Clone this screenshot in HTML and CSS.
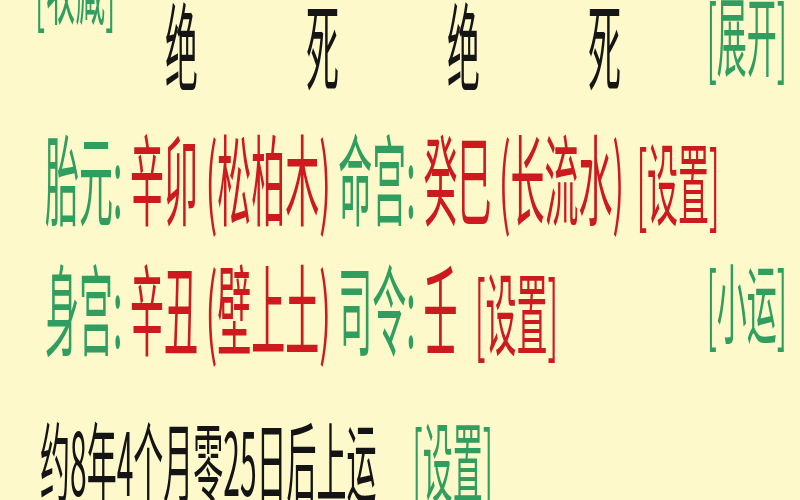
FILE: index.html
```html
<!DOCTYPE html>
<html lang="zh-CN">
<head>
<meta charset="utf-8">
<title>排盘</title>
<link rel="stylesheet" href="styles.css">
</head>
<body>
<div class="page">
  <div class="row row-top">
    <span class="tag tag-fav">[收藏]</span>
    <span class="cell">绝</span>
    <span class="cell">死</span>
    <span class="cell">绝</span>
    <span class="cell cell-last">死</span>
    <span class="tag tag-right">[展开]</span>
  </div>
  <div class="row row-mid">
    <span class="line"><span class="lbl">胎元:</span> <span class="val">辛卯 (松柏木)</span> <span class="lbl">命宫:</span> <span class="val">癸巳 (长流水)</span> <span class="val set">[设置]</span></span>
  </div>
  <div class="row row-mid">
    <span class="line"><span class="lbl">身宫:</span> <span class="val">辛丑 (壁上土)</span> <span class="lbl">司令:</span> <span class="val">壬</span> <span class="val set set-wide">[设置]</span></span>
    <span class="tag tag-luck">[小运]</span>
  </div>
  <div class="row row-bottom">
    <span class="plain">约8年4个月零25日后上运</span>
    <span class="tag tag-set">[设置]</span>
  </div>
</div>
</body>
</html>
```
FILE: styles.css
```css
html, body {
  margin: 0;
  padding: 0;
}
body {
  background: #fdf9cb;
  width: 800px;
  height: 500px;
  overflow: hidden;
}
.page {
  margin-top: -20px;
  transform: scaleY(2.9);
  transform-origin: 0 0;
  font-family: "Noto Sans CJK SC", "Noto Sans", sans-serif;
}
.row {
  display: flex;
  align-items: center;
  justify-content: space-between;
  height: 45px;
  line-height: 45px;
  font-size: 33px;
  padding: 0 13px 0 45px;
  white-space: nowrap;
}
.row > span {
  flex: none;
}
.row-top {
  justify-content: flex-start;
  padding-left: 35px;
  color: #151515;
}
.row-mid {
  font-size: 34px;
}
.tag {
  color: #2f9e5e;
  font-size: 30px;
}
.tag-fav {
  width: 130px;
  align-self: flex-start;
  margin-top: -22px;
}
.cell {
  width: 141px;
}
.cell-last {
  width: auto;
}
.tag-right {
  margin-left: auto;
  margin-bottom: 9px;
}
.tag-luck {
  margin-bottom: 4px;
}
.lbl {
  color: #2f9e5e;
}
.val {
  color: #cc1a1f;
}
.set {
  font-size: 31px;
  margin-left: 5px;
}
.set-wide {
  margin-left: 10px;
}
.row-bottom {
  justify-content: flex-start;
  margin-top: 8px;
  padding-left: 40px;
  font-size: 30px;
}
.plain {
  color: #141414;
}
.tag-set {
  margin-left: 36px;
}
```
